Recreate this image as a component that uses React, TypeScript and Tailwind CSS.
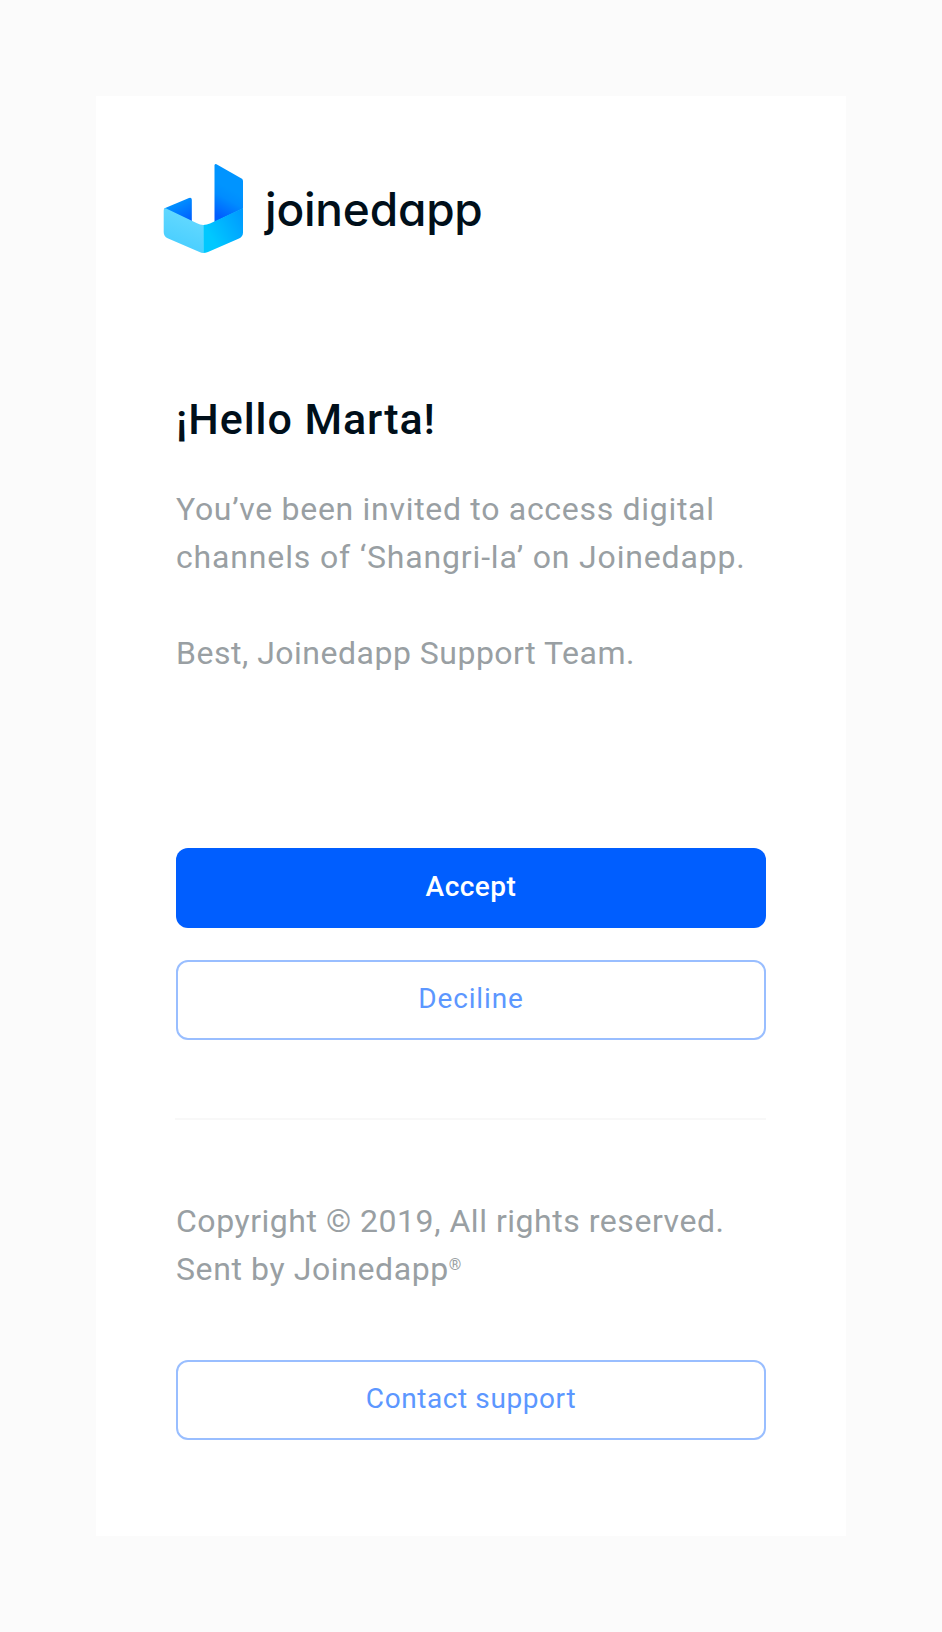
function LogoMark() {
  return (
    <svg width="80" height="92" viewBox="0 0 80 92" className="shrink-0" aria-hidden="true">
      <defs>
        <linearGradient id="tall" gradientUnits="userSpaceOnUse" x1="69" y1="27" x2="55" y2="53">
          <stop offset="0" stopColor="#0094ff" />
          <stop offset="0.35" stopColor="#008cff" />
          <stop offset="1" stopColor="#005eff" />
        </linearGradient>
        <linearGradient id="short" gradientUnits="userSpaceOnUse" x1="14" y1="40" x2="24" y2="59">
          <stop offset="0" stopColor="#008fff" />
          <stop offset="1" stopColor="#005eff" />
        </linearGradient>
        <linearGradient id="frontLeft" gradientUnits="userSpaceOnUse" x1="24" y1="52" x2="14" y2="78">
          <stop offset="0" stopColor="#62d8ff" />
          <stop offset="1" stopColor="#4dd0ff" />
        </linearGradient>
        <linearGradient id="frontRight" gradientUnits="userSpaceOnUse" x1="80" y1="56" x2="48" y2="74">
          <stop offset="0" stopColor="#009dff" />
          <stop offset="1" stopColor="#00c8ff" />
        </linearGradient>
      </defs>
      <path d="M51.5 2.5Q51.5 .2 53.5 1.2L78.5 15.5Q80 16.4 80 18V45.5L51.5 59Z" fill="url(#tall)" />
      <path d="M1 45.5L26 35Q28.8 34.2 28.8 36.7V58.5Z" fill="url(#short)" />
      <path d="M.7 47.5Q.7 44.4 3.2 45.6L34 60.3Q37 61.9 40.3 61.9V90Q38.3 90 36.5 89.1L4.6 75.3Q.7 73.5 .7 69Z" fill="url(#frontLeft)" />
      <path d="M80 45V69.5Q80 73.5 76 75.5L45 89Q42.5 90 40.3 90V61.9Q44 61.9 47 60.5Z" fill="url(#frontRight)" />
    </svg>
  );
}

const button = 'flex h-20 w-full items-center justify-center rounded-xl pb-0.5 text-[28px]';
const outline = `${button} border-2 border-[#99beff] text-[#5c97ff]`;

export default function App() {
  return (
    <div className="min-h-[1632px] bg-[#fbfbfb] p-24 font-['Roboto',sans-serif]">
      <main className="flex h-[1440px] w-[750px] flex-col bg-white px-20 pb-24">
        <header className="-ml-[13px] flex h-[159px] items-end gap-[22px]">
          <LogoMark />
          <span className="pb-[18px] font-['Inter',sans-serif] text-[46px] leading-[56px] font-medium tracking-[-0.2px] text-[#000f1a] [font-feature-settings:'cv11']">
            joinedapp
          </span>
        </header>
        <h1 className="mt-[138px] text-[43px] leading-[52px] font-medium tracking-[0.92px] text-[#000f1a]">¡Hello Marta!</h1>
        <div className="mt-10 text-[32px] leading-[48px] whitespace-nowrap text-[#999fa3]">
          <p className="tracking-[0.7px]">You’ve been invited to access digital</p>
          <p className="tracking-[0.84px]">channels of ‘Shangri-la’ on Joinedapp.</p>
          <p className="mt-12 tracking-[0.5px]">Best, Joinedapp Support Team.</p>
        </div>
        <div className="mt-[171px] flex flex-col gap-8">
          <button className={`${button} bg-[#005eff] font-medium tracking-[0.5px] text-white`}>Accept</button>
          <button className={`${outline} tracking-[0.89px]`}>Deciline</button>
        </div>
        <hr className="mt-[78px] -ml-px border-t-2 border-[#f8f8f8]" />
        <div className="mt-[77px] text-[32px] leading-[48px] whitespace-nowrap text-[#999fa3]">
          <p className="tracking-[0.53px]">Copyright © 2019, All rights reserved.</p>
          <p className="tracking-[0.6px]">
            Sent by Joinedapp<span className="relative -top-[10px] text-[16px] leading-none">®</span>
          </p>
        </div>
        <button className={`${outline} mt-[67px] tracking-[0.59px]`}>Contact support</button>
      </main>
    </div>
  );
}
